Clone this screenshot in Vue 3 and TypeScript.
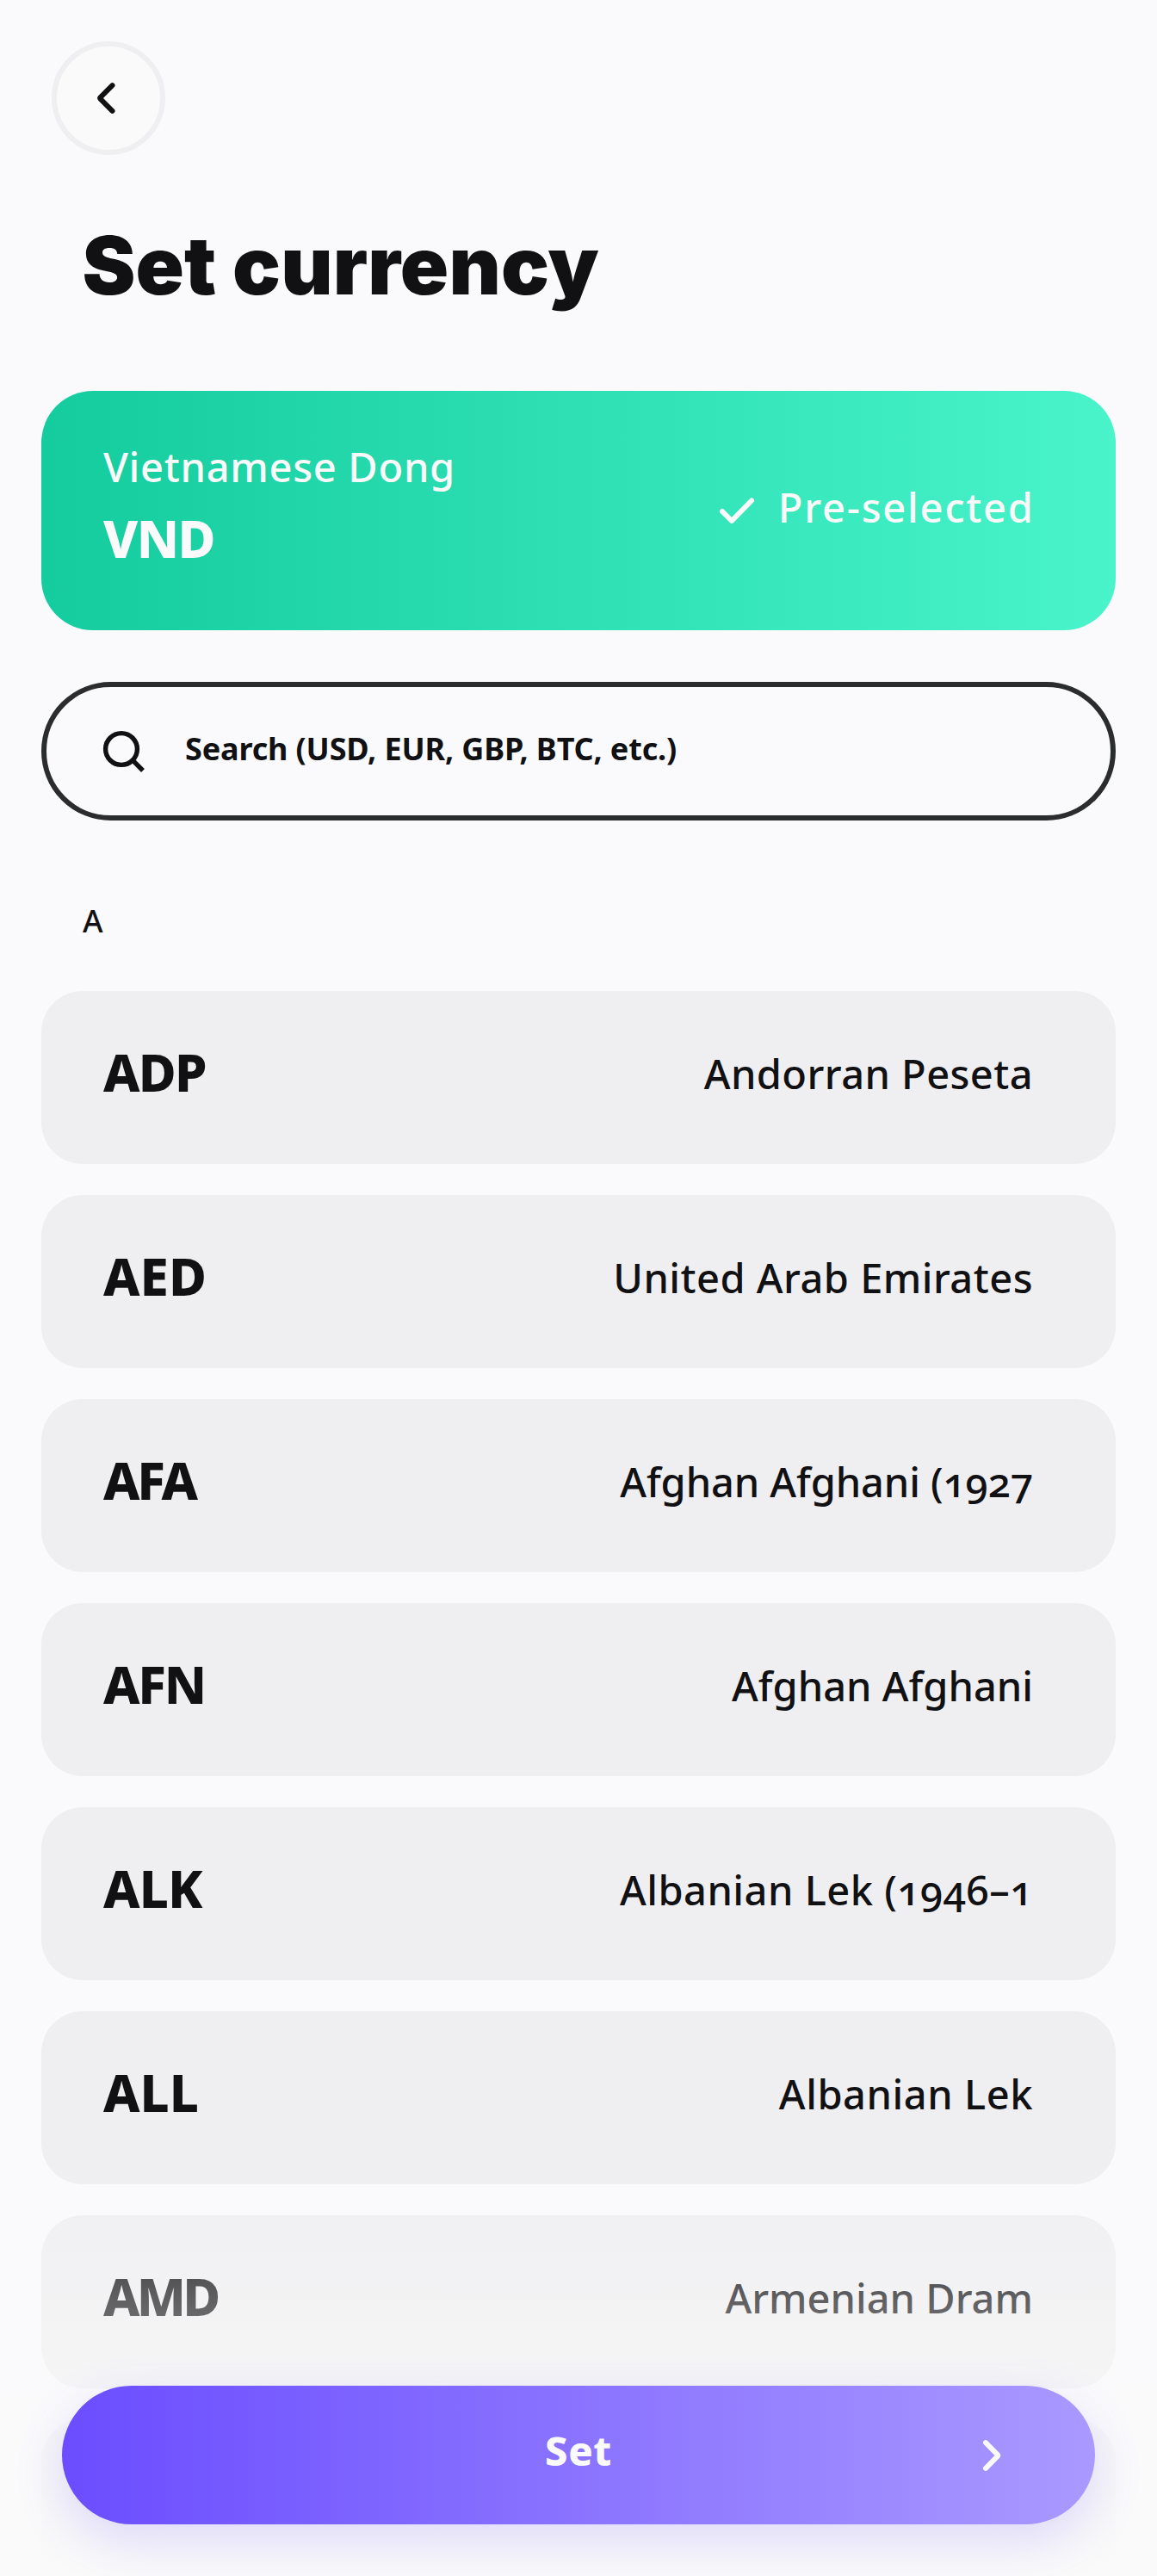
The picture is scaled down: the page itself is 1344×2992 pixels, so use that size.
<script setup lang="ts">
interface Currency {
  code: string
  name: string
  codeTracking: number
  nameTracking: number
}

const currencies: Currency[] = [
  { code: 'ADP', name: 'Andorran Peseta', codeTracking: -1.75, nameTracking: 0.43 },
  { code: 'AED', name: 'United Arab Emirates', codeTracking: 0.1, nameTracking: 0.48 },
  { code: 'AFA', name: 'Afghan Afghani (1927', codeTracking: -3.2, nameTracking: -0.1 },
  { code: 'AFN', name: 'Afghan Afghani', codeTracking: -2.2, nameTracking: 0 },
  { code: 'ALK', name: 'Albanian Lek (1946–1', codeTracking: -0.85, nameTracking: 0.5 },
  { code: 'ALL', name: 'Albanian Lek', codeTracking: 0, nameTracking: 0.55 },
  { code: 'AMD', name: 'Armenian Dram', codeTracking: -3.7, nameTracking: 0 },
  { code: 'ANG', name: '', codeTracking: 0, nameTracking: 0 },
]
</script>

<template>
  <main class="screen">
    <button class="back" aria-label="Back">
      <svg viewBox="0 0 48 48" width="48" height="48"><path d="M28.5 9.2 14.6 23.1Q13.8 24 14.6 24.9L28.5 38.8" /></svg>
    </button>

    <h1 class="title">Set currency</h1>

    <section class="selected">
      <div class="selected-info">
        <span class="selected-name">Vietnamese Dong</span>
        <span class="selected-code">VND</span>
      </div>
      <div class="selected-state">
        <svg viewBox="0 0 48 48" width="48" height="48"><path d="M7 25 18 36 41 12.5" /></svg>
        <span>Pre-selected</span>
      </div>
    </section>

    <label class="search">
      <svg viewBox="0 0 54 54" width="54" height="54">
        <circle cx="24" cy="24" r="18.4" />
        <path d="M37.2 37.2 49 49" />
      </svg>
      <span>Search (USD, EUR, GBP, BTC, etc.)</span>
    </label>

    <h2 class="letter">A</h2>

    <ul class="list">
      <li v-for="c in currencies" :key="c.code" class="row">
        <span class="code" :style="{ letterSpacing: c.codeTracking + 'px' }"><template v-if="c.name">{{ c.code }}</template></span>
        <span class="name" :style="{ letterSpacing: c.nameTracking + 'px' }">{{ c.name }}</span>
      </li>
    </ul>

    <footer class="footer">
      <button class="set">
        <span class="set-label">Set</span>
        <svg viewBox="0 0 48 48" width="48" height="48"><path d="M17 9.2 30.8 23.1Q31.6 24 30.8 24.9L17 38.8" /></svg>
      </button>
    </footer>
  </main>
</template>

<style>
body {
  margin: 0;
  background: #fafafd;
}
</style>

<style scoped>
.screen {
  position: relative;
  box-sizing: border-box;
  width: 1344px;
  height: 2992px;
  padding: 48px 48px 0;
  overflow: hidden;
  background: #fafafd;
  color: #111114;
  font-family: 'Noto Sans', 'Open Sans', sans-serif;
  font-variant-numeric: oldstyle-nums;
  white-space: nowrap;
}

svg {
  display: block;
  flex: none;
  fill: none;
  stroke: currentColor;
  stroke-width: 6;
  stroke-linecap: round;
  stroke-linejoin: round;
}

button {
  margin: 0;
  font-family: inherit;
}

.back {
  display: flex;
  align-items: center;
  justify-content: center;
  box-sizing: border-box;
  width: 132px;
  height: 132px;
  margin-left: 12px;
  padding: 0;
  border: 6px solid #efeff1;
  border-radius: 50%;
  background: #fafafa;
  color: #111114;
}

.title {
  margin: 78px 0 96px 47.5px;
  font-family: Inter, sans-serif;
  font-size: 93px;
  line-height: 100px;
  font-weight: 900;
  letter-spacing: 0.14px;
}

.selected {
  display: flex;
  align-items: center;
  justify-content: space-between;
  box-sizing: border-box;
  height: 278px;
  padding: 0 96px 0 72px;
  border-radius: 60px;
  background: linear-gradient(90deg, #14cc9e, #49f4cb);
  color: #fafafa;
}

.selected-info {
  display: flex;
  flex-direction: column;
  gap: 17px;
  margin-bottom: 13px;
}

.selected-name {
  font-size: 47px;
  line-height: 60px;
  font-weight: 500;
  letter-spacing: 0.72px;
}

.selected-code {
  font-size: 60px;
  line-height: 72px;
  font-weight: 800;
  letter-spacing: -1.5px;
}

.selected-state {
  display: flex;
  align-items: center;
  gap: 24px;
}

.selected-state span {
  margin: 0 -1.8px 8px 0;
  font-size: 47px;
  line-height: 60px;
  font-weight: 500;
  letter-spacing: 1.8px;
}

.search {
  display: flex;
  align-items: center;
  gap: 44px;
  box-sizing: border-box;
  height: 161px;
  margin-top: 60px;
  padding-left: 63px;
  border: 6px solid #2b2c2d;
  border-radius: 81px;
}

.search svg {
  stroke-width: 5.4;
  stroke-linecap: butt;
}

.search span {
  margin-bottom: 5px;
  font-size: 36px;
  line-height: 48px;
  font-weight: 700;
  letter-spacing: -0.15px;
}

.letter {
  margin: 93px 0 57px 48px;
  font-size: 36px;
  line-height: 48px;
  font-weight: 500;
}

.list {
  display: flex;
  flex-direction: column;
  gap: 36px;
  margin: 0;
  padding: 0;
  list-style: none;
}

.row {
  display: flex;
  flex: none;
  align-items: center;
  justify-content: space-between;
  box-sizing: border-box;
  height: 201px;
  padding: 0 96px 0 72px;
  border-radius: 48px;
  background: #efeff1;
}

.code {
  margin-bottom: 14px;
  font-size: 60px;
  line-height: 72px;
  font-weight: 800;
}

.name {
  margin-bottom: 9px;
  font-size: 47px;
  line-height: 60px;
  font-weight: 500;
}

/* Fades the list out underneath the pinned action */
.footer {
  position: absolute;
  right: 0;
  bottom: 0;
  left: 0;
  box-sizing: border-box;
  height: 484px;
  padding: 263px 72px 60px;
  background: linear-gradient(180deg, rgba(250, 250, 250, 0), #fafafa);
}

.set {
  display: grid;
  grid-template-columns: 1fr auto 1fr;
  align-items: center;
  box-sizing: border-box;
  width: 100%;
  height: 161px;
  padding: 0 96px;
  border: 0;
  border-radius: 81px;
  background: linear-gradient(90deg, #6b4dff, #aa99ff);
  box-shadow: 0 20px 56px rgba(107, 77, 255, 0.18);
  color: #fafafa;
}

.set-label {
  grid-column: 2;
  margin-bottom: 11px;
  font-size: 47px;
  line-height: 60px;
  font-weight: 800;
  letter-spacing: 0.6px;
}

.set svg {
  justify-self: end;
}
</style>
